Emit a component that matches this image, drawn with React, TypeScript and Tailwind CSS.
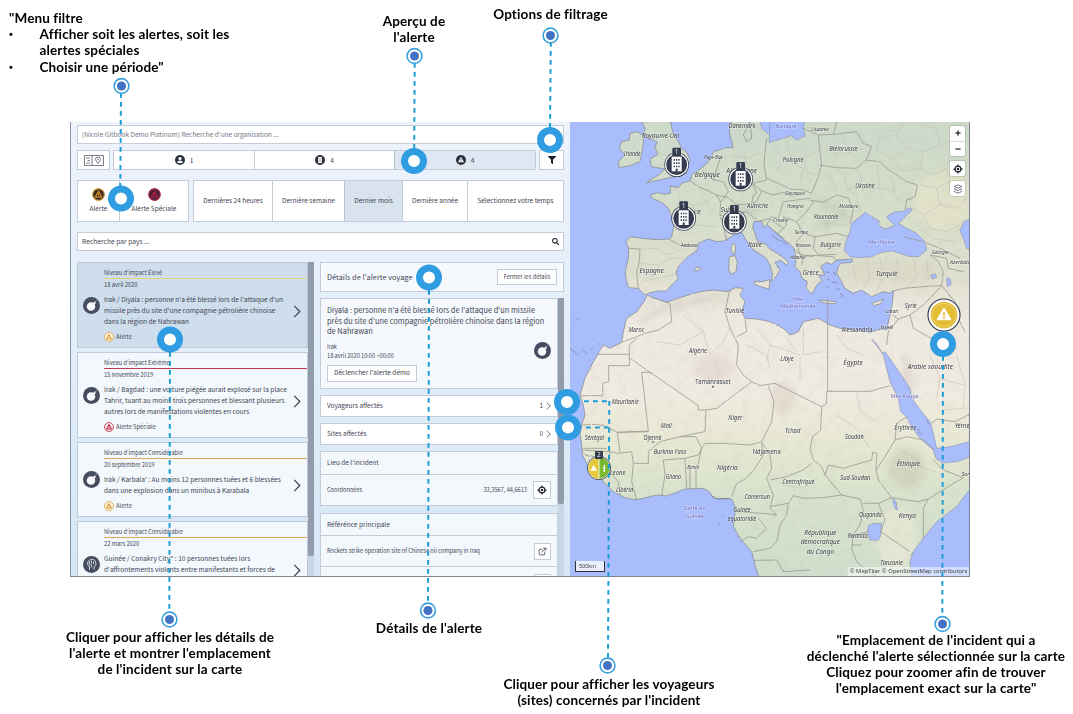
import React from "react";
import { FaFilter, FaSearch, FaPlus, FaMinus } from "react-icons/fa";
import { FiExternalLink } from "react-icons/fi";

/* ---------- small icons ---------- */

const BombIcon = () => (
  <svg viewBox="0 0 34 34" className="size-[17px] shrink-0">
    <circle cx="17" cy="17" r="17" fill="#474d60" />
    <circle cx="16" cy="19" r="8.5" fill="#f6f8fb" />
    <path d="M20 12l3-3 3 3-3 3z" fill="#f6f8fb" />
    <path d="M24 10q2-3 4-4" stroke="#aeb4c0" strokeWidth="1.6" fill="none" />
  </svg>
);

const FistIcon = () => (
  <svg viewBox="0 0 34 34" className="size-[17px] shrink-0">
    <circle cx="17" cy="17" r="17" fill="#474d60" />
    <path
      d="M13 28v-6l-4-5q0-7 4-9 4-3 8-1 5 2 5 8 0 4-4 7v5"
      fill="none"
      stroke="#dfe5ee"
      strokeWidth="1.8"
    />
    <path d="M13 11v6M17 9v6M21 11v5M12 18q4-2 6 1l-2 4" stroke="#dfe5ee" strokeWidth="1.8" fill="none" />
  </svg>
);

const Triangle = ({ ring, bg, fg, cls }: { ring: string; bg: string; fg: string; cls: string }) => (
  <svg viewBox="0 0 24 24" className={cls}>
    <circle cx="12" cy="12" r="10.8" fill={bg} stroke={ring} strokeWidth="2" />
    <path d="M12 6l6 11H6z" fill="none" stroke={fg} strokeWidth="2.4" strokeLinejoin="round" />
    <path d="M12 10v4" stroke={fg} strokeWidth="2" />
  </svg>
);

const CrosshairIcon = ({ cls }: { cls: string }) => (
  <svg viewBox="0 0 24 24" className={cls} fill="none" stroke="#22262f">
    <circle cx="12" cy="12" r="7" strokeWidth="3" />
    <circle cx="12" cy="12" r="3" fill="#22262f" stroke="none" />
    <path d="M12 1v5M12 18v5M1 12h5M18 12h5" strokeWidth="3" />
  </svg>
);

const LayersIcon = () => (
  <svg viewBox="0 0 24 24" className="size-[10px]" fill="none" stroke="#5d6473" strokeWidth="2">
    <path d="M12 2l9 4-9 4-9-4z" strokeLinejoin="round" />
    <path d="M5 10l-2 2 9 4 9-4-2-2M5 16l-2 2 9 4 9-4-2-2" strokeLinejoin="round" />
  </svg>
);

const Chevron = ({ cls }: { cls: string }) => (
  <svg viewBox="0 0 8 14" className={cls} fill="none" stroke="#3b4150" strokeWidth="1.3">
    <path d="M1 1l6 6-6 6" />
  </svg>
);

/* ---------- left panel ---------- */

const box = "border border-[#c3ccd8]";

type Alert = {
  level: string;
  line: string;
  date: string;
  text: string[];
  kind?: "Alerte" | "Alerte Spéciale";
  icon: "bomb" | "fist";
  selected?: boolean;
  h: string;
};

const alerts: Alert[] = [
  {
    level: "Niveau d'impact Élevé",
    line: "bg-[#e3d377]",
    date: "18 avril 2020",
    text: [
      "Irak / Diyala : personne n'a été blessé lors de l'attaque d'un",
      "missile près du site d'une compagnie pétrolière chinoise",
      "dans la région de Nahrawan",
    ],
    kind: "Alerte",
    icon: "bomb",
    selected: true,
    h: "h-[86px]",
  },
  {
    level: "Niveau d'impact Extrême",
    line: "bg-[#c03a55]",
    date: "15 novembre 2019",
    text: [
      "Irak / Bagdad : une voiture piégée aurait explosé sur la place",
      "Tahrir, tuant au moins trois personnes et blessant plusieurs",
      "autres lors de manifestations violentes en cours",
    ],
    kind: "Alerte Spéciale",
    icon: "bomb",
    h: "h-[86px]",
  },
  {
    level: "Niveau d'impact Considérable",
    line: "bg-[#dca85a]",
    date: "20 septembre 2019",
    text: [
      "Irak / Karbala' : Au moins 12 personnes tuées et 6 blessées",
      "dans une explosion dans un minibus à Karabala",
    ],
    kind: "Alerte",
    icon: "bomb",
    h: "h-[75px]",
  },
  {
    level: "Niveau d'impact Considérable",
    line: "bg-[#dca85a]",
    date: "22 mars 2020",
    text: [
      'Guinée / Conakry City" : 10 personnes tuées lors',
      "d'affrontements violents entre manifestants et forces de",
    ],
    icon: "fist",
    h: "h-[86px]",
  },
];

const AlertCard = ({ a }: { a: Alert }) => (
  <div
    className={`flex shrink-0 border border-[#bccadb] ${a.h} ${a.selected ? "bg-[#cfdeec]" : "bg-[#f3f8fd]"}`}
  >
    <div className="flex w-[26px] shrink-0 items-center pl-[5px]">
      {a.icon === "bomb" ? <BombIcon /> : <FistIcon />}
    </div>
    <div className="flex min-w-0 flex-1 flex-col">
      <div className="mt-[3px] h-[12px] shrink-0 text-[5.65px] leading-[13px]">{a.level}</div>
      <div className={`h-px shrink-0 ${a.line}`} />
      <div className="h-[12px] shrink-0 text-[5.75px] leading-[12px]">{a.date}</div>
      <div className="flex shrink-0">
        <div
          className={`mt-[3px] w-[187px] shrink-0 text-[6.58px] leading-[11px] ${a.icon === "fist" ? "min-h-[33px]" : ""}`}
        >
          {a.text.map((t) => (
            <div key={t}>{t}</div>
          ))}
        </div>
        <div className="mt-[4px] flex items-center">
          <Chevron cls="ml-[2px] h-[13px] w-[8px]" />
        </div>
      </div>
      {a.kind && (
        <div className="mt-[4px] flex h-[12px] shrink-0 items-center gap-[2px] text-[5.75px] leading-[12px]">
          {a.kind === "Alerte" ? (
            <Triangle ring="#e0a33e" bg="#fff6e2" fg="#d9922b" cls="size-[10px]" />
          ) : (
            <Triangle ring="#c5314d" bg="#fde8ec" fg="#b01f3d" cls="size-[10px]" />
          )}
          {a.kind}
        </div>
      )}
    </div>
  </div>
);

const Periods = () => (
  <div className={`flex h-[42px] flex-1 bg-white text-[6.48px] text-[#3e4453] ${box}`}>
    <div className="flex w-[78px] items-center justify-center">Dernières 24 heures</div>
    <div className="flex w-[72px] items-center justify-center border-l border-[#c3ccd8]">Dernière semaine</div>
    <div className="flex w-[58px] items-center justify-center border-l border-[#b5c3d3] bg-[#d8e3ee]">Dernier mois</div>
    <div className="flex w-[65px] items-center justify-center border-l border-[#c3ccd8]">Dernière année</div>
    <div className="flex flex-1 items-center justify-center border-l border-[#c3ccd8]">Sélectionnez votre temps</div>
  </div>
);

const Panel = () => (
  <div className="flex w-[500px] shrink-0 flex-col overflow-hidden border-l border-[#8a93a3] bg-linear-to-b from-[#eef3fc] via-[#e2eef9] to-[#d6e6f5] pr-[6px] pl-[6px] text-[#3f4554]">
    <div className={`mt-[3px] flex h-[19px] shrink-0 items-center bg-white pl-[4px] text-[6.53px] text-[#747a86] ${box}`}>
      [Nicole Gitbook Demo Platinum] Recherche d'une organisation ...
    </div>

    <div className="mt-[6px] flex h-[20px] shrink-0">
      <div className={`flex w-[33px] items-center justify-center bg-white ${box}`}>
        <svg viewBox="0 0 40 22" className="h-[11px] w-[20px]" fill="none" stroke="#5a6070" strokeWidth="1.6">
          <path d="M1 1h38v20H1zM16 1v20M4 6h8M7 11h5M4 16h8" />
          <path d="M28 17q-5-6-5-8a5 5 0 0 1 10 0q0 2-5 8z" />
          <circle cx="28" cy="9" r="1" />
        </svg>
      </div>
      <div className={`ml-[3px] flex w-[423px] bg-white text-[6.7px] ${box}`}>
        <div className="flex w-[140px] items-center justify-center gap-[5px]">
          <svg viewBox="0 0 20 20" className="size-[10px]">
            <circle cx="10" cy="10" r="10" fill="#2b303d" />
            <circle cx="10" cy="7" r="3.2" fill="#fff" />
            <path d="M4 15q1-4 6-4t6 4q-6 3-12 0z" fill="#fff" />
          </svg>
          1
        </div>
        <div className="flex w-[140px] items-center justify-center gap-[5px] border-l border-[#c3ccd8]">
          <svg viewBox="0 0 20 20" className="size-[10px]">
            <circle cx="10" cy="10" r="10" fill="#2b303d" />
            <path d="M6 4h8v12H6z" fill="#fff" />
            <path d="M8 6v8M12 6v8" stroke="#2b303d" strokeWidth="1.4" strokeDasharray="2 1.2" />
          </svg>
          4
        </div>
        <div className="flex flex-1 items-center justify-center gap-[5px] border-l border-[#b5c3d3] bg-[#dfe8f2]">
          <svg viewBox="0 0 20 20" className="size-[10px]">
            <circle cx="10" cy="10" r="10" fill="#2b303d" />
            <path d="M10 3.5l6 11H4z" fill="#fff" />
            <path d="M10 7.5v3.5M10 12v1.5" stroke="#2b303d" strokeWidth="1.5" />
          </svg>
          4
        </div>
      </div>
      <div className={`ml-[3px] flex flex-1 items-center justify-center bg-white ${box}`}>
        <FaFilter className="size-[8px] text-[#1d2129]" />
      </div>
    </div>

    <div className="mt-[10px] flex h-[42px] shrink-0 gap-[4px]">
      <div className={`flex w-[112px] bg-white text-[6.48px] ${box}`}>
        <div className="flex w-[41px] flex-col items-center justify-center gap-[1px]">
          <Triangle ring="#d99a3a" bg="#3a2f2a" fg="#d98f22" cls="size-[13px]" />
          <span className="leading-[13px]">Alerte</span>
        </div>
        <div className="flex flex-1 flex-col items-center justify-center gap-[1px] border-l border-[#c3ccd8]">
          <Triangle ring="#b3304f" bg="#40233a" fg="#b01f45" cls="size-[13px]" />
          <span className="leading-[13px]">Alerte Spéciale</span>
        </div>
      </div>
      <Periods />
    </div>

    <div className={`mt-[10px] flex h-[19px] shrink-0 items-center justify-between bg-white pr-[4px] pl-[4px] text-[6.7px] ${box}`}>
      <span>Recherche par pays ...</span>
      <FaSearch className="size-[7px] text-[#1d2129]" />
    </div>

    <div className="mt-[11px] flex min-h-0 flex-1">
      <div className="flex w-[231px] shrink-0 flex-col gap-[4px] overflow-hidden">
        {alerts.map((a, i) => (
          <AlertCard key={i} a={a} />
        ))}
      </div>
      <div className="w-[6px] shrink-0 bg-[#c9d6e4]">
        <div className="h-[294px] rounded-b-[2px] bg-[#919ba9]" />
      </div>

      <div className="ml-[6px] flex min-w-0 flex-1 flex-col">
        <div className={`flex h-[30px] shrink-0 items-center justify-between bg-[#f5f9fe] pr-[6px] pl-[6px] ${box}`}>
          <span className="text-[7.4px]">Détails de l'alerte voyage</span>
          <span className="flex h-[16px] w-[60px] items-center justify-center border border-[#c3ccd8] bg-white text-[5.7px]">
            Fermer les détails
          </span>
        </div>
        <div className="mt-[6px] flex min-h-0 flex-1">
          <div className="flex w-[238px] shrink-0 flex-col overflow-hidden">
            <div className={`h-[91px] shrink-0 bg-[#f5f9fe] pl-[6px] ${box}`}>
              <div className="pt-[6px] text-[7.42px] leading-[10.5px]">
                <div>Diyala : personne n'a été blessé lors de l'attaque d'un missile</div>
                <div>près du site d'une compagnie pétrolière chinoise dans la région</div>
                <div>de Nahrawan</div>
              </div>
              <div className="mt-[4px] flex h-[20px] items-center justify-between pr-[6px]">
                <div className="text-[5.65px] leading-[9px]">
                  <div>Irak</div>
                  <div>18 avril 2020 10:00 +00:00</div>
                </div>
                <BombIcon />
              </div>
              <div className="mt-[4px] flex h-[17px] w-[90px] items-center justify-center border border-[#c3ccd8] bg-white text-[6.5px]">
                Déclencher l'alerte démo
              </div>
            </div>
            <div className={`mt-[6px] flex h-[22px] shrink-0 items-center bg-white pr-[6px] pl-[6px] text-[6.48px] ${box}`}>
              <span className="flex-1">Voyageurs affectés</span>
              <span>1</span>
              <Chevron cls="ml-[3px] h-[8px] w-[5px]" />
            </div>
            <div className={`mt-[6px] flex h-[22px] shrink-0 items-center bg-white pr-[6px] pl-[6px] text-[6.48px] ${box}`}>
              <span className="flex-1">Sites affectés</span>
              <span>0</span>
              <Chevron cls="ml-[3px] h-[8px] w-[5px]" />
            </div>
            <div className={`mt-[6px] flex h-[24px] shrink-0 items-center bg-[#f3f8fd] pl-[6px] text-[6.48px] ${box}`}>
              Lieu de l'incident
            </div>
            <div className="flex h-[31px] shrink-0 items-center border border-t-0 border-[#c3ccd8] bg-[#f3f8fd] pr-[6px] pl-[6px] text-[5.65px]">
              <span className="flex-1">Coordonnées</span>
              <span>33,3567, 44,6613</span>
              <span className={`ml-[6px] flex size-[18px] items-center justify-center bg-white ${box}`}>
                <CrosshairIcon cls="size-[10px]" />
              </span>
            </div>
            <div className={`mt-[7px] flex h-[23px] shrink-0 items-center bg-[#f3f8fd] pl-[6px] text-[6.6px] ${box}`}>
              Référénce principale
            </div>
            <div className="flex h-[31px] shrink-0 items-center border border-t-0 border-[#c3ccd8] bg-[#f3f8fd] pr-[6px] pl-[6px] text-[5.62px]">
              <span className="flex-1">Rockets strike operation site of Chinese oil company in Iraq</span>
              <span className={`flex size-[17px] items-center justify-center bg-white ${box}`}>
                <FiExternalLink className="size-[9px] text-[#30343f]" />
              </span>
            </div>
            <div className="flex h-[31px] shrink-0 items-center justify-end border border-t-0 border-[#c3ccd8] bg-[#f3f8fd] pr-[6px]">
              <span className={`size-[17px] bg-white ${box}`} />
            </div>
          </div>
          <div className="w-[6px] shrink-0 bg-[#c9d6e4]">
            <div className="h-[206px] rounded-b-[2px] bg-[#919ba9]" />
          </div>
        </div>
      </div>
    </div>
  </div>
);

/* ---------- map ---------- */

const mainland =
  "M480,21 478,50 485,80 490,98 465,98 448,105 430,110 422,132 405,150 385,165 365,180 360,197 335,205 325,218 300,212 302,234 285,238 262,233 240,240 250,252 275,262 295,280 305,305 312,330 305,365 298,372 260,374 215,370 180,365 168,380 176,400 175,430 166,470 168,490 175,518 205,520 225,540 240,533 265,528 290,528 305,510 325,490 318,475 325,455 350,428 382,405 385,385 395,380 415,372 440,380 460,378 485,365 500,348 515,352 525,370 550,405 575,420 590,432 600,450 608,478 603,500 618,484 630,465 615,442 632,436 650,450 655,440 630,420 600,402 588,388 562,378 548,335 552,320 574,318 582,338 592,330 622,358 655,384 672,400 678,430 675,455 690,470 696,490 712,500 708,520 725,537 735,520 742,508 757,498 745,480 765,480 752,455 770,442 785,448 800,435 850,432 845,442 812,445 805,455 800,475 815,500 825,520 850,535 875,525 905,545 940,530 960,535 970,525 968,560 960,600 950,645 930,642 900,652 860,645 810,640 780,630 745,610 700,620 685,650 660,660 640,640 600,620 560,612 525,610 515,590 525,560 510,540 520,520 495,518 475,530 430,525 390,530 330,548 290,562 245,547 232,540 222,560 200,590 170,610 160,650 155,682 120,700 100,690 85,715 65,750 45,790 30,840 40,870 45,900 35,930 30,960 35,990 38,1020 52,1050 75,1070 100,1100 130,1130 165,1148 195,1154 220,1150 260,1140 290,1143 345,1122 400,1120 418,1130 432,1150 485,1152 497,1180 490,1235 510,1270 545,1310 555,1350 568,1390 1205,1390 1205,15 480,15Z";

const seas = [
  "M598,15 598,82 640,70 665,62 680,76 705,62 700,40 704,15Z",
  "M570,15 575,40 598,60 600,15Z",
  "M885,292 905,305 928,318 925,330 945,342 975,332 960,318 950,305 970,292 1000,288 1022,278 1026,286 1010,300 1000,312 985,325 1010,340 1040,355 1065,380 1070,405 1045,425 1015,424 990,415 965,408 935,412 905,425 870,428 840,425 822,405 828,380 840,350 845,325 865,310Z",
  "M1200,312 1182,320 1170,345 1180,370 1190,400 1205,405 1205,310Z",
  "M905,672 922,690 940,720 960,800 985,850 992,890 1010,905 1025,935 1050,970 1090,1005 1098,1030 1118,1044 1160,1040 1205,1024 1205,978 1140,995 1100,1000 1090,955 1080,920 1055,890 1025,850 1020,820 980,760 945,710 938,715 918,690Z",
  "M1205,1115 1160,1175 1100,1220 1060,1270 1030,1310 1020,1340 1026,1390 1205,1390Z",
  "M895,1232 910,1226 935,1225 932,1262 925,1276 900,1275 892,1255Z",
  "M968,1150 978,1160 982,1185 974,1180Z",
  "M1125,600 1133,615 1142,640 1134,640Z",
  "M1130,490 1140,490 1143,508 1132,515Z",
  "M1082,480 1095,477 1100,486 1088,492Z",
];

const islands = [
  "M215,21 225,40 218,62 240,70 262,82 255,95 264,118 240,132 244,155 285,162 268,178 228,204 262,196 300,188 350,176 345,160 360,135 352,115 335,100 325,80 308,50 300,15Z",
  "M180,55 200,50 222,62 218,100 210,140 180,152 148,158 145,140 165,120 148,100 155,80 178,75Z",
  "M490,385 497,392 495,418 484,412 483,395Z",
  "M478,425 495,422 502,440 498,470 482,478 476,460Z",
  "M552,500 575,500 600,494 597,522 572,515 555,508Z",
  "M748,555 775,558 798,560 795,566 765,564 750,560Z",
  "M906,565 925,558 942,552 932,566 912,572Z",
  "M372,464 380,456 392,460 385,468Z",
  "M540,21 545,70 530,80 520,60Z",
];

const strongBorders = [
  // Europe
  "M178,400 210,402 208,440 200,470 205,520",
  "M298,372 330,392 385,395",
  "M360,197 385,215 410,225 440,240 452,262 475,230 460,200 430,195 395,165M440,240 475,248",
  "M430,195 440,160 455,120",
  "M452,262 450,300 460,330 470,378M450,300 480,312 510,295 530,290 560,315M475,248 500,270 545,265 550,240 560,235 548,205 590,195 582,150 585,110 590,70",
  "M548,205 575,228 610,240 640,232 670,245",
  "M575,228 560,260 545,265M600,305 625,310 640,260 720,250",
  "M590,190 625,205 660,222 700,225 725,235",
  "M745,60 750,110 755,150 745,185 725,235",
  "M700,40 745,60 790,58 800,21M790,58 860,50 880,85 905,95 888,135 860,160 800,158 750,150",
  "M888,135 930,140 950,160 1010,200 1042,210 1035,245 1010,255 1005,285",
  "M800,240 835,250 850,285 840,325M720,255 760,262 800,240",
  "M640,305 680,320 710,290 730,262M680,320 700,355 735,365 800,355 835,365",
  "M735,365 730,400 745,420 800,418M625,355 650,330 640,305M700,355 680,380 690,420 730,425M670,400 700,425 695,450",
  "M690,420 745,422 790,425 800,440M560,320 600,310M590,330 600,312 640,340",
  // Middle East
  "M970,528 1000,520 1060,515 1115,512 1120,470 1105,440 1080,420M1115,512 1155,560 1165,610 1185,650",
  "M968,600 985,612 1020,600 1060,570 1115,512M985,612 955,650 950,690M1020,600 1030,640 1120,690 1160,700",
  "M1000,365 1060,380 1110,400 1170,430M1080,420 1130,430 1135,460 1180,470",
  // Africa
  "M155,682 200,665 225,655 265,645 305,620 300,565 250,548",
  "M85,718 178,718 178,690 200,670",
  "M178,718 178,752 116,752 116,800 98,804 98,842 32,842",
  "M178,728 240,772 310,820 385,872 385,885 408,885 440,880 545,800",
  "M215,772 240,772M215,772 235,948 142,952",
  "M408,885 405,950 330,965 270,980",
  "M545,800 520,780 500,750 505,690 480,640 465,590 478,530",
  "M545,800 570,812 615,805 755,875 770,865 770,830 773,829 773,550",
  "M500,665 530,650 525,612M773,829 900,829 960,812",
  "M595,812 612,860 605,920 575,980 540,990 460,985 405,985 395,1000 378,965 330,965",
  "M755,875 752,945 728,965 720,1000 730,1035 755,1055 765,1080 815,1140 870,1152",
  "M765,1080 775,1050 820,1060 870,1045 905,1035 908,1012 920,1015 918,1065",
  "M918,1065 945,1025 975,975 980,925 1010,905M975,975 1010,965 1060,975 1095,1005",
  "M918,1065 925,1095 965,1148 1010,1155 1045,1160 1075,1152 1110,1130 1180,1088 1120,1065 1090,1035",
  "M1075,1152 1060,1180 1060,1270M965,1148 925,1165 945,1215 932,1250 1020,1310",
  "M870,1152 880,1185 870,1230 850,1260 845,1300 860,1340 885,1362 930,1390",
  "M880,1165 925,1165M850,1260 895,1250M845,1290 875,1290",
  "M600,1095 650,1085 700,1065 725,1045M815,1140 760,1148 700,1150 670,1142 655,1165 650,1200 630,1230 620,1280 600,1300 550,1310",
  "M575,980 600,1020 605,1060 590,1090 610,1140 600,1180 620,1200 590,1196 500,1190",
  "M575,985 580,1020 555,1060 530,1090 500,1105 485,1145",
  "M600,1175 655,1165M510,1280 535,1265 560,1270 590,1240 565,1210",
  "M550,1336 620,1335 640,1370 720,1365",
  "M345,1030 350,1120M360,1060 360,1122M378,1055 378,1120M395,1000 385,1045 378,1055",
  "M280,1035 285,1080 275,1140M280,1035 345,1030 385,1020 395,1000",
  "M270,980 235,1010 235,1045 190,1045 185,1010 145,1015 120,1010 35,1005M190,1045 185,1100 200,1155",
  "M142,952 110,935 80,928 35,930M142,952 150,1012M235,950 142,952",
  "M110,1060 145,1100 150,1140M70,1050 110,1060 120,1010M40,1000 110,1000",
  "M1085,925 1100,912 1155,920 1185,905 1200,895",
];

const weakBorders = [
  "M250,100 280,120 330,120M270,60 300,80M260,150 300,150",
  "M320,215 330,260 370,270 420,260M330,260 305,300M370,270 375,330 315,345M375,330 440,335M390,220 400,250 430,290M340,360 370,335",
  "M210,402 260,400 290,420 340,400M208,445 260,450 300,430 340,430M215,500 260,490 310,480M230,460 250,490",
  "M480,120 530,130 580,110M490,170 520,190 560,170M475,220 520,225M500,270 520,240M520,100 530,150 500,180",
  "M610,100 640,130 620,170M650,80 660,120 700,130 740,110M640,130 700,160 690,200M700,130 710,170 740,180",
  "M770,90 800,120 790,150M800,120 850,110 880,100M820,60 830,100M780,180 800,230M820,170 830,220 860,240M870,170 880,230 910,260M920,150 930,220 980,230M960,180 980,250 1005,260M830,220 930,220M860,240 870,290",
  "M750,280 800,270 830,300M740,310 800,330 835,330M770,340 770,280",
  "M900,40 930,70 920,110 970,130M930,70 980,60 1000,21M980,60 1010,100 970,130 1000,170 1050,160 1060,110 1010,100M1060,110 1110,90 1100,40 1060,30M1110,90 1140,110 1130,160 1090,180 1050,160M1050,210 1100,220 1140,200 1130,160M1100,220 1110,270 1160,280 1200,240M1110,270 1060,300 1030,280M1060,300 1080,340 1130,350 1170,330M1040,330 1090,370 1150,380",
  "M850,450 860,500M890,440 900,490 880,520M930,430 940,480 920,530M980,430 985,470 970,510M1030,430 1040,480 1020,510M1070,430 1075,490",
  "M560,640 600,690 590,740M600,690 690,720 690,800M650,670 680,710M700,640 700,720 750,710M530,690 590,720 600,760M800,660 830,700 880,720M860,830 870,890 920,920",
  "M340,600 400,650 420,720M260,680 330,690 400,650M420,720 460,680 480,640",
  "M1080,720 1110,790 1100,850M1110,790 1180,810M1160,720 1185,810 1180,880 1120,885",
  "M980,1000 1020,1020 1060,1060 1100,1070M1000,1060 1040,1110M800,900 860,940 900,1000M640,1110 700,1120 740,1090",
];

type Label = [string, number, number, number, number];

const labels: Label[] = [
  ["Royaume-Uni", 272, 68, 112, 23],
  ["Irlande", 187, 122, 50, 19],
  ["Danemark", 516, 39, 80, 19],
  ["Pays-Bas", 430, 132, 56, 17],
  ["Belgique", 412, 187, 75, 22],
  ["Allemagne", 515, 175, 92, 23],
  ["France", 358, 296, 70, 23],
  ["Suisse", 477, 290, 50, 20],
  ["Autriche", 563, 280, 62, 19],
  ["Andorre", 358, 397, 50, 17],
  ["Espagne", 245, 473, 73, 23],
  ["Italie", 555, 395, 42, 23],
  ["Tunisie", 495, 595, 55, 21],
  ["Maroc", 199, 651, 47, 21],
  ["Lituanie", 750, 47, 52, 18],
  ["Biélorussie", 820, 107, 84, 20],
  ["Pologne", 669, 142, 62, 21],
  ["Ukraine", 885, 220, 58, 20],
  ["Slovaquie", 675, 239, 58, 17],
  ["Hongrie", 676, 280, 50, 18],
  ["Moldavie", 836, 278, 56, 17],
  ["Roumanie", 768, 312, 74, 21],
  ["Croatie", 632, 320, 46, 17],
  ["Serbie", 694, 357, 40, 18],
  ["Kosovo", 700, 396, 46, 17],
  ["Bulgarie", 782, 396, 62, 21],
  ["Albanie", 684, 433, 46, 17],
  ["Grèce", 722, 481, 48, 21],
  ["Turquie", 950, 482, 64, 23],
  ["Syrie", 1022, 578, 36, 21],
  ["Liban", 966, 595, 36, 17],
  ["Géorgie", 1110, 417, 50, 18],
  ["Azerbaïdjan", 1182, 448, 84, 17],
  ["Algérie", 384, 714, 54, 21],
  ["Mauritanie", 166, 866, 80, 21],
  ["Niger", 496, 914, 42, 21],
  ["Mali", 289, 939, 32, 21],
  ["Sénégal", 73, 974, 58, 21],
  ["Burkina Faso", 300, 1018, 98, 20],
  ["Nigéria", 472, 1064, 62, 23],
  ["Bénin", 370, 1063, 36, 16],
  ["Ghana", 310, 1091, 46, 20],
  ["Leone", 143, 1080, 46, 20],
  ["Libéria", 164, 1130, 52, 20],
  ["Cameroun", 562, 1152, 76, 20],
  ["Guinée", 516, 1192, 52, 20],
  ["équatoriale", 516, 1217, 86, 20],
  ["Libye", 651, 739, 40, 21],
  ["Égypte", 849, 750, 58, 23],
  ["Arabie saoudite", 1081, 763, 136, 22],
  ["Érythrée", 1006, 946, 66, 20],
  ["Yémen", 1182, 939, 56, 20],
  ["Tchad", 668, 953, 46, 21],
  ["Soudan", 853, 971, 56, 21],
  ["Éthiopie", 1015, 1052, 70, 23],
  ["Centrafrique", 685, 1108, 96, 20],
  ["Sud-Soudan", 856, 1094, 90, 20],
  ["Somalie", 1203, 1084, 56, 18],
  ["Ouganda", 901, 1207, 68, 20],
  ["Kenya", 1012, 1209, 52, 23],
  ["Rwanda", 863, 1269, 60, 19],
  ["République", 751, 1260, 96, 23],
  ["démocratique", 751, 1288, 118, 23],
  ["du Congo", 751, 1316, 82, 23],
  ["Tanzanie", 965, 1349, 68, 20],
];

const cities: Label[] = [
  ["Alessandria", 861, 650, 92, 19],
  ["Israël", 951, 643, 38, 17],
  ["Tamanrasset", 429, 807, 106, 19],
  ["Djenné", 248, 974, 54, 19],
  ["Ndjamena", 590, 1018, 84, 19],
];

const waters: Label[] = [
  ["Baltique", 648, 38, 62, 17],
  ["Mer Noire", 934, 386, 78, 18],
  ["Mer", 685, 557, 32, 18],
  ["Méditerranée", 684, 579, 106, 18],
  ["Mer Rouge", 1004, 849, 84, 18],
  ["Golfe de", 374, 1186, 66, 17],
  ["Guinée", 374, 1209, 56, 17],
];

const MapLabels = ({ items, fill, italic }: { items: Label[]; fill: string; italic: boolean }) => (
  <g fill={fill} fontFamily="'Noto Sans', sans-serif" fontStyle={italic ? "italic" : "normal"} textAnchor="middle">
    {items.map(([t, x, y, w, s], i) => (
      <text
        key={i}
        x={x}
        y={y}
        fontSize={s}
        textLength={w}
        lengthAdjust="spacingAndGlyphs"
        stroke="#ffffff"
        strokeOpacity="0.35"
        strokeWidth="4"
        paintOrder="stroke"
      >
        {t}
      </text>
    ))}
  </g>
);

const SiteMarker = ({ x, y }: { x: number; y: number }) => (
  <g transform={`translate(${x} ${y})`}>
    <circle r="37" fill="#343c4e" />
    <circle r="33" fill="#343c4e" stroke="#fff" strokeWidth="3.5" />
    <path d="M-15-24h30v44h-30z" fill="#fff" />
    <path d="M-7-17v26M0-17v26M7-17v26" stroke="#343c4e" strokeWidth="4" strokeDasharray="5 5" />
    <path d="M-3 12h6v8h-6z" fill="#343c4e" />
    <rect x="-13" y="-51" width="26" height="25" rx="4" fill="#343c4e" />
    <text y="-32" fontSize="20" fill="#e7eaf0" textAnchor="middle" fontFamily="'Noto Sans', sans-serif">
      1
    </text>
  </g>
);

const MapView = () => (
  <div className="relative w-[400px] shrink-0 overflow-hidden border-r border-[#7d8390]">
    <svg viewBox="0 21 1200 1365" className="block h-[455px] w-[400px]">
      <defs>
        <linearGradient id="land" gradientUnits="userSpaceOnUse" x1="0" y1="21" x2="0" y2="1386">
          <stop offset="0" stopColor="#cddaca" />
          <stop offset="0.2" stopColor="#d6decb" />
          <stop offset="0.34" stopColor="#e0e0d1" />
          <stop offset="0.44" stopColor="#efeae1" />
          <stop offset="0.6" stopColor="#f0ebe1" />
          <stop offset="0.72" stopColor="#e6e8d2" />
          <stop offset="0.82" stopColor="#d8e2cc" />
          <stop offset="1" stopColor="#d0dfcd" />
        </linearGradient>
        <filter id="rough" x="-5%" y="-5%" width="110%" height="110%">
          <feTurbulence type="fractalNoise" baseFrequency="0.16" numOctaves="2" seed="4" result="n" />
          <feDisplacementMap in="SourceGraphic" in2="n" scale="5" xChannelSelector="R" yChannelSelector="G" />
        </filter>
        <filter id="soft" x="-30%" y="-30%" width="160%" height="160%">
          <feGaussianBlur stdDeviation="10" />
        </filter>
        <clipPath id="landClip">
          <path d={mainland} />
        </clipPath>
        <filter id="relief" x="0" y="0" width="100%" height="100%">
          <feTurbulence type="fractalNoise" baseFrequency="0.035" numOctaves="4" seed="9" />
          <feColorMatrix values="0 0 0 0 0.45  0 0 0 0 0.42  0 0 0 0 0.38  0.9 0 0 0 -0.4" />
        </filter>
      </defs>
      <rect y="21" width="1200" height="1365" fill="#a9bcfc" />
      <g filter="url(#rough)" stroke="#8a8f93" strokeWidth="2.4" fill="url(#land)" strokeLinejoin="round">
        <path d={mainland} />
        {islands.map((d) => (
          <path key={d} d={d} />
        ))}
      </g>
      <g clipPath="url(#landClip)">
        <g filter="url(#soft)">
          <ellipse cx="1010" cy="1060" rx="55" ry="60" fill="#c9cbb8" opacity="0.6" />
          <ellipse cx="980" cy="1270" rx="60" ry="90" fill="#e8e8d4" opacity="0.8" />
          <ellipse cx="1120" cy="260" rx="90" ry="90" fill="#e5e4c8" opacity="0.7" />
          <ellipse cx="430" cy="760" rx="60" ry="40" fill="#e4d7cf" opacity="0.7" />
          <ellipse cx="640" cy="850" rx="35" ry="50" fill="#e1d5cc" opacity="0.7" />
          <ellipse cx="970" cy="470" rx="150" ry="35" fill="#d8d7c3" opacity="0.6" />
          <ellipse cx="1010" cy="800" rx="20" ry="90" fill="#dacfc5" opacity="0.5" />
          <path d="M210 620L300 570L450 545" stroke="#d9d1c7" strokeWidth="14" fill="none" />
          <path d="M465 310L510 290L570 285" stroke="#c0cabc" strokeWidth="16" fill="none" />
          <path d="M740 250L830 300L750 335" stroke="#c0ccb8" strokeWidth="12" fill="none" />
        </g>
        <rect y="21" width="1200" height="1365" filter="url(#relief)" opacity="0.25" />
      </g>
      <g filter="url(#rough)">
        <g fill="#a9bcfc" stroke="#8d95b0" strokeWidth="2">
          {seas.map((d) => (
            <path key={d} d={d} />
          ))}
        </g>
        <g fill="none" stroke="#c3c2b7" strokeWidth="1.8">
          {weakBorders.map((d) => (
            <path key={d} d={d} />
          ))}
        </g>
        <g fill="none" stroke="#97978f" strokeWidth="2.3" strokeLinejoin="round">
          {strongBorders.map((d) => (
            <path key={d} d={d} />
          ))}
        </g>
        <g fill="#c9d0c6" stroke="#707a86" strokeWidth="2">
          <path d="M765 470l14 3M770 490l10 6M790 470l6 12M785 500l14 5M800 520l10 6M770 512l8 8M800 500l6 6M812 535l6 10M604 360l25 18M610 345l30 25M632 375l20 14M1070 915l8 14M1040 940l12 8M1045 950l10 8M1022 1320l8-6M424 1140l14 10M440 1152l40-2M44 1018l14 6M62 1022l12 4" />
          <path d="M0 700l14 10 10 12M30 715l10-12 12 14M60 708l8-8M20 610l8 4M86 685l5 3M445 1225l5 8M458 1200l4 4" strokeWidth="2.5" stroke="#8790a8" fill="none" />
        </g>
      </g>
      <circle cx="429" cy="815" r="2.5" fill="#333" />
      <circle cx="249" cy="981" r="2.5" fill="#333" />
      <MapLabels items={labels} fill="#3c3d43" italic />
      <MapLabels items={cities} fill="#3c3d43" italic={false} />
      <MapLabels items={waters} fill="#6f72c0" italic={false} />

      <SiteMarker x={320} y={149} />
      <SiteMarker x={512} y={192} />
      <SiteMarker x={341} y={310} />
      <SiteMarker x={493} y={321} />

      <g transform="translate(1122 600)">
        <circle r="48" fill="#fff" stroke="#343c4e" strokeWidth="3.5" />
        <circle r="40" fill="#e3bd36" />
        <circle r="35" fill="none" stroke="#efd98a" strokeWidth="2" />
        <path d="M0-20L20 14H-20z" fill="#fff" stroke="#fff" strokeWidth="4" strokeLinejoin="round" />
        <path d="M0-9V3M0 6v5" stroke="#e3bd36" strokeWidth="5" />
      </g>

      <g transform="translate(87 1059)">
        <circle r="35" fill="#fff" stroke="#4b5260" strokeWidth="3" />
        <path d="M0-32A32 32 0 0 0 0 32z" fill="#e5c93a" />
        <path d="M0-32A32 32 0 0 1 0 32z" fill="#79b833" />
        <path d="M0-33V33" stroke="#f4f4dc" strokeWidth="3" />
        <path d="M-16-10l10 18h-20z" fill="#fff" />
        <circle cx="16" cy="-7" r="2.5" fill="#fff" />
        <path d="M12-3h8l-2 7v8h-4V4z" fill="#fff" />
        <rect x="-12" y="-51" width="24" height="24" rx="4" fill="#343c4e" />
        <text y="-32" fontSize="20" fill="#e7eaf0" textAnchor="middle" fontFamily="'Noto Sans', sans-serif">
          2
        </text>
      </g>
    </svg>

    <div className="absolute top-[4px] right-[4px] flex flex-col gap-[5px]">
      <div className="flex h-[30px] w-[15px] flex-col rounded-[2px] bg-white text-black shadow-[0_0_0_1px_rgba(0,0,0,0.1)]">
        <div className="flex flex-1 items-center justify-center border-b border-[#dddddd]">
          <FaPlus className="size-[6px]" />
        </div>
        <div className="flex flex-1 items-center justify-center">
          <FaMinus className="size-[6px]" />
        </div>
      </div>
      <div className="flex size-[15px] items-center justify-center rounded-[2px] bg-white shadow-[0_0_0_1px_rgba(0,0,0,0.1)]">
        <CrosshairIcon cls="size-[10px]" />
      </div>
      <div className="flex size-[15px] items-center justify-center rounded-[2px] bg-white shadow-[0_0_0_1px_rgba(0,0,0,0.1)]">
        <LayersIcon />
      </div>
    </div>

    <div className="absolute bottom-[4px] left-[5px] flex h-[11px] w-[30px] items-center border border-t-0 border-[#333333] bg-white/75 pl-[3px] font-['Liberation_Sans'] text-[5.6px] text-[#444444]">
      500km
    </div>
    <div className="absolute right-0 bottom-0 flex h-[9px] w-[121px] items-center justify-center bg-white/50 font-['Noto_Sans'] text-[5.85px] whitespace-nowrap text-[#444444]">
      © MapTiler © OpenStreetMap contributors
    </div>
  </div>
);

/* ---------- callouts ---------- */

const bigRings = [
  [121, 198.5],
  [414, 161],
  [550, 140],
  [170, 339.5],
  [429, 277.5],
  [567, 402],
  [568, 427.5],
  [943, 344],
];

const smallRings = [
  [121.5, 86],
  [414.5, 56],
  [550.5, 35.5],
  [169.5, 619.5],
  [428, 610.5],
  [607.5, 665.5],
  [942.5, 624],
];

const leaders = [
  "M121 93L120.3 187",
  "M414.7 63L414.2 149",
  "M550.8 42L550 128",
  "M170 352L169.3 612",
  "M429 290L428 603",
  "M575 401.2H609",
  "M577 427.6H609",
  "M609.3 401L608 658",
  "M943 356L942.3 617",
];

const Callouts = () => (
  <svg viewBox="0 0 1073 714" className="pointer-events-none absolute inset-0 h-[714px] w-[1073px]">
    <g fill="none" stroke="#1d9dd6" strokeWidth="2" strokeDasharray="4.8 4.2">
      {leaders.map((d) => (
        <path key={d} d={d} />
      ))}
    </g>
    {bigRings.map(([x, y]) => (
      <circle key={`${x}-${y}`} cx={x} cy={y} r="9.5" fill="#fff" stroke="#309de2" strokeWidth="7" />
    ))}
    {smallRings.map(([x, y]) => (
      <g key={`${x}-${y}`}>
        <circle cx={x} cy={y} r="7.4" fill="#fff" stroke="#3a9fdd" strokeWidth="1.6" />
        <circle cx={x} cy={y} r="4.5" fill="#4472c4" />
      </g>
    ))}
  </svg>
);

const note = "absolute whitespace-nowrap text-center";

const Notes = () => (
  <div className="font-['Lato'] text-[13.5px] leading-[16.2px] font-bold tracking-[0.12px] text-black">
    <div className="absolute top-[10px] left-[9px] whitespace-nowrap">
      <div>"Menu filtre</div>
      <div className="flex">
        <span className="w-[30.5px] font-['Liberation_Sans'] text-[11px]">•</span>
        <span>
          Afficher soit les alertes, soit les
          <br />
          alertes spéciales
        </span>
      </div>
      <div className="flex">
        <span className="w-[30.5px] font-['Liberation_Sans'] text-[11px]">•</span>
        <span>Choisir une période"</span>
      </div>
    </div>
    <div className={`${note} top-[13px] left-[364px] w-[100px]`}>
      Aperçu de
      <br />
      l'alerte
    </div>
    <div className={`${note} top-[6px] left-[480px] w-[141px]`}>Options de filtrage</div>
    <div className={`${note} top-[628.5px] left-[50px] w-[240px]`}>
      Cliquer pour afficher les détails de
      <br />
      l'alerte et montrer l'emplacement
      <br />
      de l'incident sur la carte
    </div>
    <div className={`${note} top-[620px] left-[359px] w-[140px]`}>Détails de l'alerte</div>
    <div className={`${note} top-[675.5px] left-[489px] w-[240px]`}>
      Cliquer pour afficher les voyageurs
      <br />
      (sites) concernés par l'incident
    </div>
    <div className={`${note} top-[631.5px] left-[796px] w-[280px]`}>
      "Emplacement de l'incident qui a
      <br />
      déclenché l'alerte sélectionnée sur la carte
      <br />
      Cliquez pour zoomer afin de trouver
      <br />
      l'emplacement exact sur la carte"
    </div>
  </div>
);

export default function App() {
  return (
    <main className="relative h-[714px] w-[1073px] overflow-hidden bg-white pt-[122px] pl-[70px]">
      <div className="flex h-[455px] w-[900px] border-b border-[#7d8390] font-['Noto_Sans_CJK_SC','Noto_Sans',sans-serif] whitespace-nowrap">
        <Panel />
        <MapView />
      </div>
      <Callouts />
      <Notes />
    </main>
  );
}
